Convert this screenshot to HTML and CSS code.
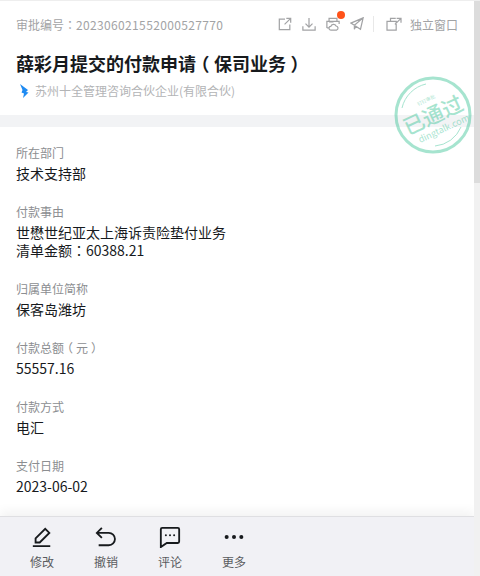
FILE: index.html
```html
<!DOCTYPE html>
<html lang="zh-CN">
<head>
<meta charset="utf-8">
<title>审批详情</title>
<link rel="stylesheet" href="styles.css">
</head>
<body>
<div class="app">
  <main class="main">
    <header class="head">
      <div class="toprow">
        <span class="serial">审批编号<span class="p" lang="zh-TW">：</span><span class="num">202306021552000527770</span></span>
        <div class="tools">
          <svg class="ic" viewBox="0 0 16 16"><path d="M8 2.500H1.500v12h12V8.500M9.500 1.500h5v5M14.500 1.500L7.500 8.500"/></svg>
          <svg class="ic" viewBox="0 0 16 16"><path d="M8 1v10M4 7.500L8 11.500l4-4M1 10.500v4.500h14v-4.500"/></svg>
          <span class="badged">
            <svg class="ic" viewBox="0 0 16 16"><path d="M3.500 5V1.500h9V5M1 12.500V5h14v3M3.500 5.500h5M3.500 12.500H1M5.500 15a2 2 0 0 1 0-4.200 3.200 3.200 0 0 1 6-.5A2.400 2.400 0 0 1 12 15z"/></svg>
            <i class="dot"></i>
          </span>
          <svg class="ic" viewBox="0 0 16 16"><path d="M15 1L1 7l4 2.500L15 1l-3 13-5.500-3.500-1.500 3.500V9.500"/></svg>
          <i class="sep"></i>
          <svg class="ic wide" viewBox="0 0 18 16"><path d="M5 4.500V1.500h6M1 5h10.500v10H1zM12 1.500h5v5M17 1.500L10 8.500"/></svg>
          <span class="standalone">独立窗口</span>
        </div>
      </div>
      <h1 class="title">薛彩月提交的付款申请<span class="br">（</span>保司业务<span class="br">）</span></h1>
      <div class="org">
        <svg class="orglogo" viewBox="0 0 10 14"><path d="M1 0l8 6-2 2 2.500.5L4 14l1-4.500L2.500 8.500 3.500 6z"/></svg>
        <span>苏州十全管理咨询合伙企业(有限合伙)</span>
      </div>
    </header>
    <div class="band"></div>
    <section class="fields">
      <div class="field"><div class="label">所在部门</div><div class="value">技术支持部</div></div>
      <div class="field"><div class="label">付款事由</div><div class="value">世懋世纪亚太上海诉责险垫付业务<br>清单金额<span class="p" lang="zh-TW">：</span>60388.21</div></div>
      <div class="field"><div class="label">归属单位简称</div><div class="value">保客岛潍坊</div></div>
      <div class="field"><div class="label">付款总额<span class="br">（</span>元<span class="br">）</span></div><div class="value">55557.16</div></div>
      <div class="field"><div class="label">付款方式</div><div class="value">电汇</div></div>
      <div class="field"><div class="label">支付日期</div><div class="value">2023-06-02</div></div>
    </section>
    <div class="stamp">
      <svg viewBox="0 0 80 80" width="80" height="80">
        <circle class="ring" cx="40" cy="40" r="37"/>
        <path class="arc" d="M9 33A32 32 0 0 1 33 9M68 52A31 31 0 0 1 42 71"/>
      </svg>
      <div class="stamptext">
        <span class="st1">钉钉审批</span>
        <span class="st2">已通过</span>
        <span class="st3">dingtalk.com</span>
      </div>
    </div>
    <footer class="bar">
      <div class="action">
        <svg class="aic" viewBox="0 0 24 24"><path d="M2 22h19M5 18v-4.500L15.500 3l4.500 4.500L9.500 18z"/></svg>
        <span>修改</span>
      </div>
      <div class="action">
        <svg class="aic" viewBox="0 0 24 24"><path d="M7.500 2L2 7.500 7.500 13M2.500 7.500H15a6.500 6.500 0 0 1 0 13.500H4"/></svg>
        <span>撤销</span>
      </div>
      <div class="action">
        <svg class="aic" viewBox="0 0 24 24"><path d="M2 3.500Q2 2 3.500 2h17Q22 2 22 3.500v13.500Q22 18.500 20.500 18.500H8.500L2 23z"/><circle class="fill" cx="7.500" cy="10" r="1.100"/><circle class="fill" cx="12" cy="10" r="1.100"/><circle class="fill" cx="16.500" cy="10" r="1.100"/></svg>
        <span>评论</span>
      </div>
      <div class="action">
        <svg class="aic" viewBox="0 0 24 24"><circle class="fill" cx="4" cy="12" r="2.200"/><circle class="fill" cx="12" cy="12" r="2.200"/><circle class="fill" cx="20" cy="12" r="2.200"/></svg>
        <span>更多</span>
      </div>
    </footer>
  </main>
  <aside class="scroll"><div class="thumb"></div></aside>
</div>
</body>
</html>
```
FILE: styles.css
```css
* { box-sizing: border-box; }
html, body { margin: 0; height: 100%; overflow: hidden; }
body {
  font-family: "Noto Sans CJK SC", "Liberation Sans", sans-serif;
  background: #fff;
  color: #171a1d;
}
.p { font-family: "Noto Sans CJK TC", sans-serif; }
.br { font-feature-settings: "halt"; margin: 0 .25em; }
.app { display: flex; width: 480px; height: 576px; border-top: 1px solid #eee; }
.main { position: relative; flex: 1; min-width: 0; overflow: hidden; display: flex; flex-direction: column; }
.head { padding: 13px 0 0 16px; height: 114px; flex: none; }
.toprow { display: flex; align-items: center; justify-content: space-between; height: 20px; }
.serial { font-size: 12px; color: #a2a3a5; }
.num { letter-spacing: .35px; }
.tools { display: flex; align-items: center; gap: 10px; padding-right: 16px; }
.ic { width: 14px; height: 14px; fill: none; stroke: #a2a3a5; stroke-width: 1.400; }
.ic.wide { width: 16px; margin-right: -2px; }
.badged { position: relative; display: flex; }
.dot { position: absolute; top: -6px; right: -5px; width: 8px; height: 8px; border-radius: 50%; background: #ff5219; }
.sep { width: 1px; height: 16px; background: #e8e8e8; margin: 0 2px 0 -1px; }
.standalone { font-size: 12px; color: #a2a3a5; }
.title { margin: 16px 0 0; font-size: 18px; line-height: 26px; font-weight: 700; color: #171a1d; white-space: nowrap; }
.org { display: flex; align-items: center; gap: 6px; margin-top: 6px; padding-left: 3px; font-size: 12px; line-height: 18px; color: #b3b4b6; }
.orglogo { width: 10px; height: 14px; fill: #1f8bf2; }
.band { height: 12px; flex: none; background: #f2f3f5; }
.fields { padding: 17px 0 0 16px; }
.field { margin-bottom: 20.500px; }
.label { font-size: 12px; line-height: 18px; color: #8c8e91; }
.value { margin-top: 3px; font-size: 14px; line-height: 17.500px; color: #171a1d; }
.stamp { position: absolute; left: 393px; top: 74px; width: 80px; height: 80px; opacity: .45; color: #3cc497; }
.stamp svg { display: block; }
.ring { fill: none; stroke: #3cc497; stroke-width: 3; }
.arc { fill: none; stroke: #3cc497; stroke-width: 1; }
.stamptext { position: absolute; inset: 0; padding-top: 2px; transform: rotate(-25deg); display: flex; flex-direction: column; align-items: center; justify-content: center; white-space: nowrap; }
.st1 { font-size: 6px; line-height: 7px; transform: scale(.8); }
.st2 { font-size: 21px; line-height: 24px; font-weight: 500; }
.st3 { font-size: 9px; line-height: 11px; transform: translateX(4px); }
.bar { position: absolute; left: 0; right: 0; bottom: 0; height: 60px; background: #f1f1f5; border-top: 1px solid #dfdfe2; box-shadow: 0 -5px 10px rgba(0,0,0,.05); display: flex; padding: 9px 0 0 10px; }
.action { width: 64px; display: flex; flex-direction: column; align-items: center; gap: 5px; font-size: 12px; line-height: 17px; color: #5a5c5f; }
.aic { width: 22px; height: 22px; fill: none; stroke: #171a1d; stroke-width: 2; }
.aic .fill { fill: #171a1d; stroke: none; }
.scroll { width: 6px; flex: none; background: #f1f1f1; }
.thumb { height: 182px; background: #dcdcdc; }
```
